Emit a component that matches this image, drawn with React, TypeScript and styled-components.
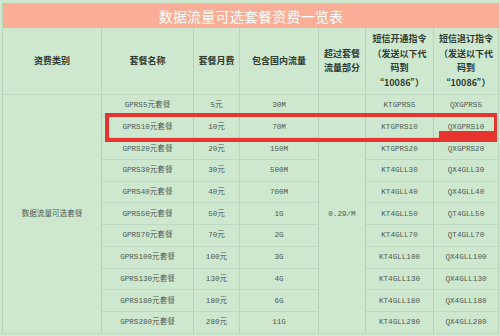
import React from "react";
import styled, { createGlobalStyle } from "styled-components";

const GlobalStyle = createGlobalStyle`
  html, body {
    margin: 0;
    padding: 0;
    background: #cee8d0;
  }
`;

const Page = styled.div`
  position: relative;
  width: 500px;
  height: 336px;
  overflow: hidden;
  background: #cee8d0;
  padding: 3px 2px 0 2px;
  box-sizing: border-box;
`;

const Table = styled.div`
  display: grid;
  grid-template-columns: 99px 92px 46px 79px 47px 68px 65px;
  grid-template-rows: 25px 67px;
  grid-auto-rows: 21.7px;
  border-left: 1px solid #b9d2bb;
`;

const TitleBar = styled.div`
  grid-column: 1 / -1;
  background: #faae98;
  color: #ffffff;
  display: flex;
  align-items: center;
  justify-content: center;
  font-family: "Noto Sans CJK SC", sans-serif;
  font-size: 14px;
  letter-spacing: 0.2px;
`;

const Cell = styled.div<{ $head?: boolean; $span?: number }>`
  grid-row: ${(p) => (p.$span ? `span ${p.$span}` : "auto")};
  border-right: 1px solid #b9d2bb;
  border-bottom: 1px solid #bfd8c1;
  display: flex;
  align-items: center;
  justify-content: center;
  text-align: center;
  box-sizing: border-box;
  color: ${(p) => (p.$head ? "#2f3a30" : "#4f5a50")};
  font-family: ${(p) =>
    p.$head
      ? `"Noto Sans CJK SC", sans-serif`
      : `"Liberation Mono", "Noto Sans CJK SC", monospace`};
  font-weight: ${(p) => (p.$head ? 700 : 400)};
  font-size: ${(p) => (p.$head ? "9px" : "7.6px")};
  line-height: ${(p) => (p.$head ? "14.5px" : "10px")};
  white-space: nowrap;
`;

const Mark = styled.div`
  position: absolute;
  left: 105px;
  top: 113px;
  width: 392px;
  height: 29px;
  border: 4px solid #e8342f;
  border-right-width: 3px;
  box-sizing: border-box;
`;

const MarkBlock = styled.div`
  position: absolute;
  left: 439px;
  top: 131px;
  width: 55px;
  height: 8px;
  background: #e8342f;
`;

type Plan = {
  name: string;
  fee: string;
  flow: string;
  on: string;
  off: string;
};

const plans: Plan[] = [
  { name: "GPRS5元套餐", fee: "5元", flow: "30M", on: "KTGPRS5", off: "QXGPRS5" },
  { name: "GPRS10元套餐", fee: "10元", flow: "70M", on: "KTGPRS10", off: "QXGPRS10" },
  { name: "GPRS20元套餐", fee: "20元", flow: "150M", on: "KTGPRS20", off: "QXGPRS20" },
  { name: "GPRS30元套餐", fee: "30元", flow: "500M", on: "KT4GLL30", off: "QX4GLL30" },
  { name: "GPRS40元套餐", fee: "40元", flow: "700M", on: "KT4GLL40", off: "QX4GLL40" },
  { name: "GPRS50元套餐", fee: "50元", flow: "1G", on: "KT4GLL50", off: "QT4GLL50" },
  { name: "GPRS70元套餐", fee: "70元", flow: "2G", on: "KT4GLL70", off: "QT4GLL70" },
  { name: "GPRS100元套餐", fee: "100元", flow: "3G", on: "KT4GLL100", off: "QX4GLL100" },
  { name: "GPRS130元套餐", fee: "130元", flow: "4G", on: "KT4GLL130", off: "QX4GLL130" },
  { name: "GPRS180元套餐", fee: "180元", flow: "6G", on: "KT4GLL180", off: "QX4GLL180" },
  { name: "GPRS280元套餐", fee: "280元", flow: "11G", on: "KT4GLL280", off: "QX4GLL280" },
];

export default function App() {
  return (
    <>
      <GlobalStyle />
      <Page>
        <Table>
          <TitleBar>数据流量可选套餐资费一览表</TitleBar>

          <Cell $head>资费类别</Cell>
          <Cell $head>套餐名称</Cell>
          <Cell $head>套餐月费</Cell>
          <Cell $head>包含国内流量</Cell>
          <Cell $head>
            超过套餐
            <br />
            流量部分
          </Cell>
          <Cell $head>
            短信开通指令
            <br />
            （发送以下代
            <br />
            码到
            <br />
            “10086”）
          </Cell>
          <Cell $head>
            短信退订指令
            <br />
            （发送以下代
            <br />
            码到
            <br />
            “10086”）
          </Cell>

          {plans.map((p, i) => (
            <React.Fragment key={p.name}>
              {i === 0 && <Cell $span={plans.length}>数据流量可选套餐</Cell>}
              <Cell>{p.name}</Cell>
              <Cell>{p.fee}</Cell>
              <Cell>{p.flow}</Cell>
              {i === 0 && <Cell $span={plans.length}>0.29/M</Cell>}
              <Cell>{p.on}</Cell>
              <Cell>{p.off}</Cell>
            </React.Fragment>
          ))}
        </Table>
        <Mark />
        <MarkBlock />
      </Page>
    </>
  );
}
